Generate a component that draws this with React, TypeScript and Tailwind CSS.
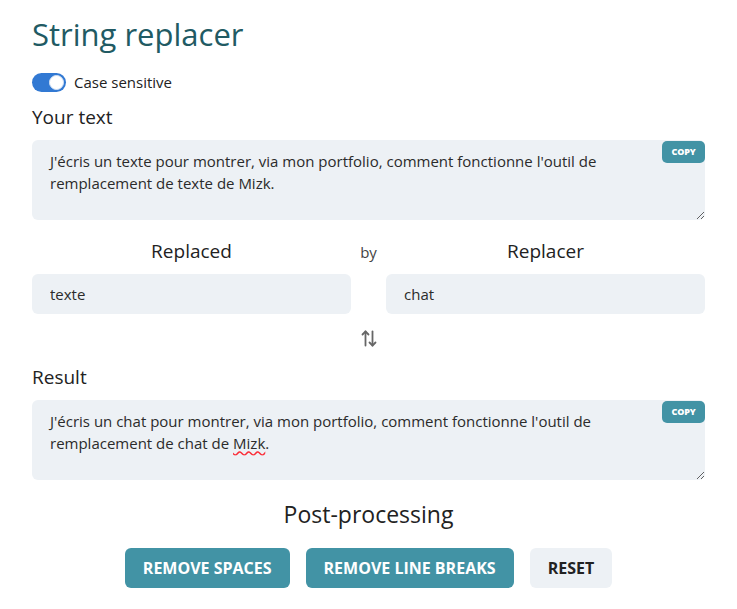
import { useState } from 'react';

const font = { fontFamily: '"Open Sans", "Noto Sans", sans-serif' };

function CopyBadge() {
  return (
    <button className="absolute right-0 top-[1px] h-[22px] w-[43px] rounded-[5px] bg-[#4293a5] text-[9px] font-extrabold tracking-tight text-white">
      COPY
    </button>
  );
}

function TextBox({ children }: { children: React.ReactNode }) {
  return (
    <div className="relative">
      <div className="h-[80px] resize-y overflow-auto rounded-md bg-[#edf1f5] py-[10px] pl-[18px] pr-[50px] text-[15px] leading-[22px] text-[#2b2b2b]">
        {children}
      </div>
      <CopyBadge />
    </div>
  );
}

export default function App() {
  const [sensitive, setSensitive] = useState(true);

  return (
    <div className="min-h-screen bg-white px-8 pt-[14px]" style={font}>
      <h1 className="text-[31px] leading-[40px] font-normal text-[#215a63]">String replacer</h1>

      <label className="mt-[18px] flex h-[20px] items-center gap-2 text-[15px] text-[#222]">
        <button
          onClick={() => setSensitive(!sensitive)}
          className={`relative h-[19px] w-[34px] rounded-full ${sensitive ? 'bg-[#3279d3]' : 'bg-gray-300'}`}
        >
          <span
            className={`absolute top-[2px] h-[15px] w-[15px] rounded-full border border-[#d5e3f5] bg-white ${sensitive ? 'right-[2px]' : 'left-[2px]'}`}
          />
        </button>
        Case sensitive
      </label>

      <div className="mt-[12px] text-[19px] leading-[26px] text-[#222]">Your text</div>
      <div className="mt-[10px]">
        <TextBox>J'écris un texte pour montrer, via mon portfolio, comment fonctionne l'outil de remplacement de texte de Mizk.</TextBox>
      </div>

      <div className="mt-[18px] grid grid-cols-[1fr_35px_1fr] items-center">
        <div className="text-center text-[19px] leading-[26px] text-[#222]">Replaced</div>
        <div className="pt-[3px] text-center text-[15px] text-[#444]">by</div>
        <div className="text-center text-[19px] leading-[26px] text-[#222]">Replacer</div>
      </div>
      <div className="mt-[10px] grid grid-cols-[1fr_35px_1fr]">
        <input
          readOnly
          value="texte"
          className="h-[40px] rounded-md bg-[#edf1f5] px-[18px] text-[15px] text-[#2b2b2b] outline-none"
        />
        <div />
        <input
          readOnly
          value="chat"
          className="h-[40px] rounded-md bg-[#edf1f5] px-[18px] text-[15px] text-[#2b2b2b] outline-none"
        />
      </div>

      <div className="mt-[16px] flex justify-center">
        <svg width="16" height="17" viewBox="0 0 16 17" fill="none" stroke="#666" strokeWidth="1.8" strokeLinecap="round" strokeLinejoin="round">
          <path d="M4.5 1.5v14" />
          <path d="M1.5 4.5l3-3 3 3" />
          <path d="M11.5 1.5v14" />
          <path d="M8.5 12.5l3 3 3-3" />
        </svg>
      </div>

      <div className="mt-[17px] text-[19px] leading-[26px] text-[#222]">Result</div>
      <div className="mt-[10px]">
        <TextBox>
          J'écris un chat pour montrer, via mon portfolio, comment fonctionne l'outil de remplacement de chat de{' '}
          <span className="underline decoration-wavy decoration-red-500">Mizk</span>.
        </TextBox>
      </div>

      <div className="mt-[19px] text-center text-[23px] leading-[30px] text-[#222]">Post-processing</div>
      <div className="mt-[19px] flex justify-center gap-4">
        <button className="h-[40px] rounded-md bg-[#4293a5] px-[18px] text-[16px] font-bold text-white">REMOVE SPACES</button>
        <button className="h-[40px] rounded-md bg-[#4293a5] px-[18px] text-[16px] font-bold text-white">REMOVE LINE BREAKS</button>
        <button className="h-[40px] rounded-md bg-[#edf1f5] px-[18px] text-[16px] font-bold text-[#222]">RESET</button>
      </div>
    </div>
  );
}
